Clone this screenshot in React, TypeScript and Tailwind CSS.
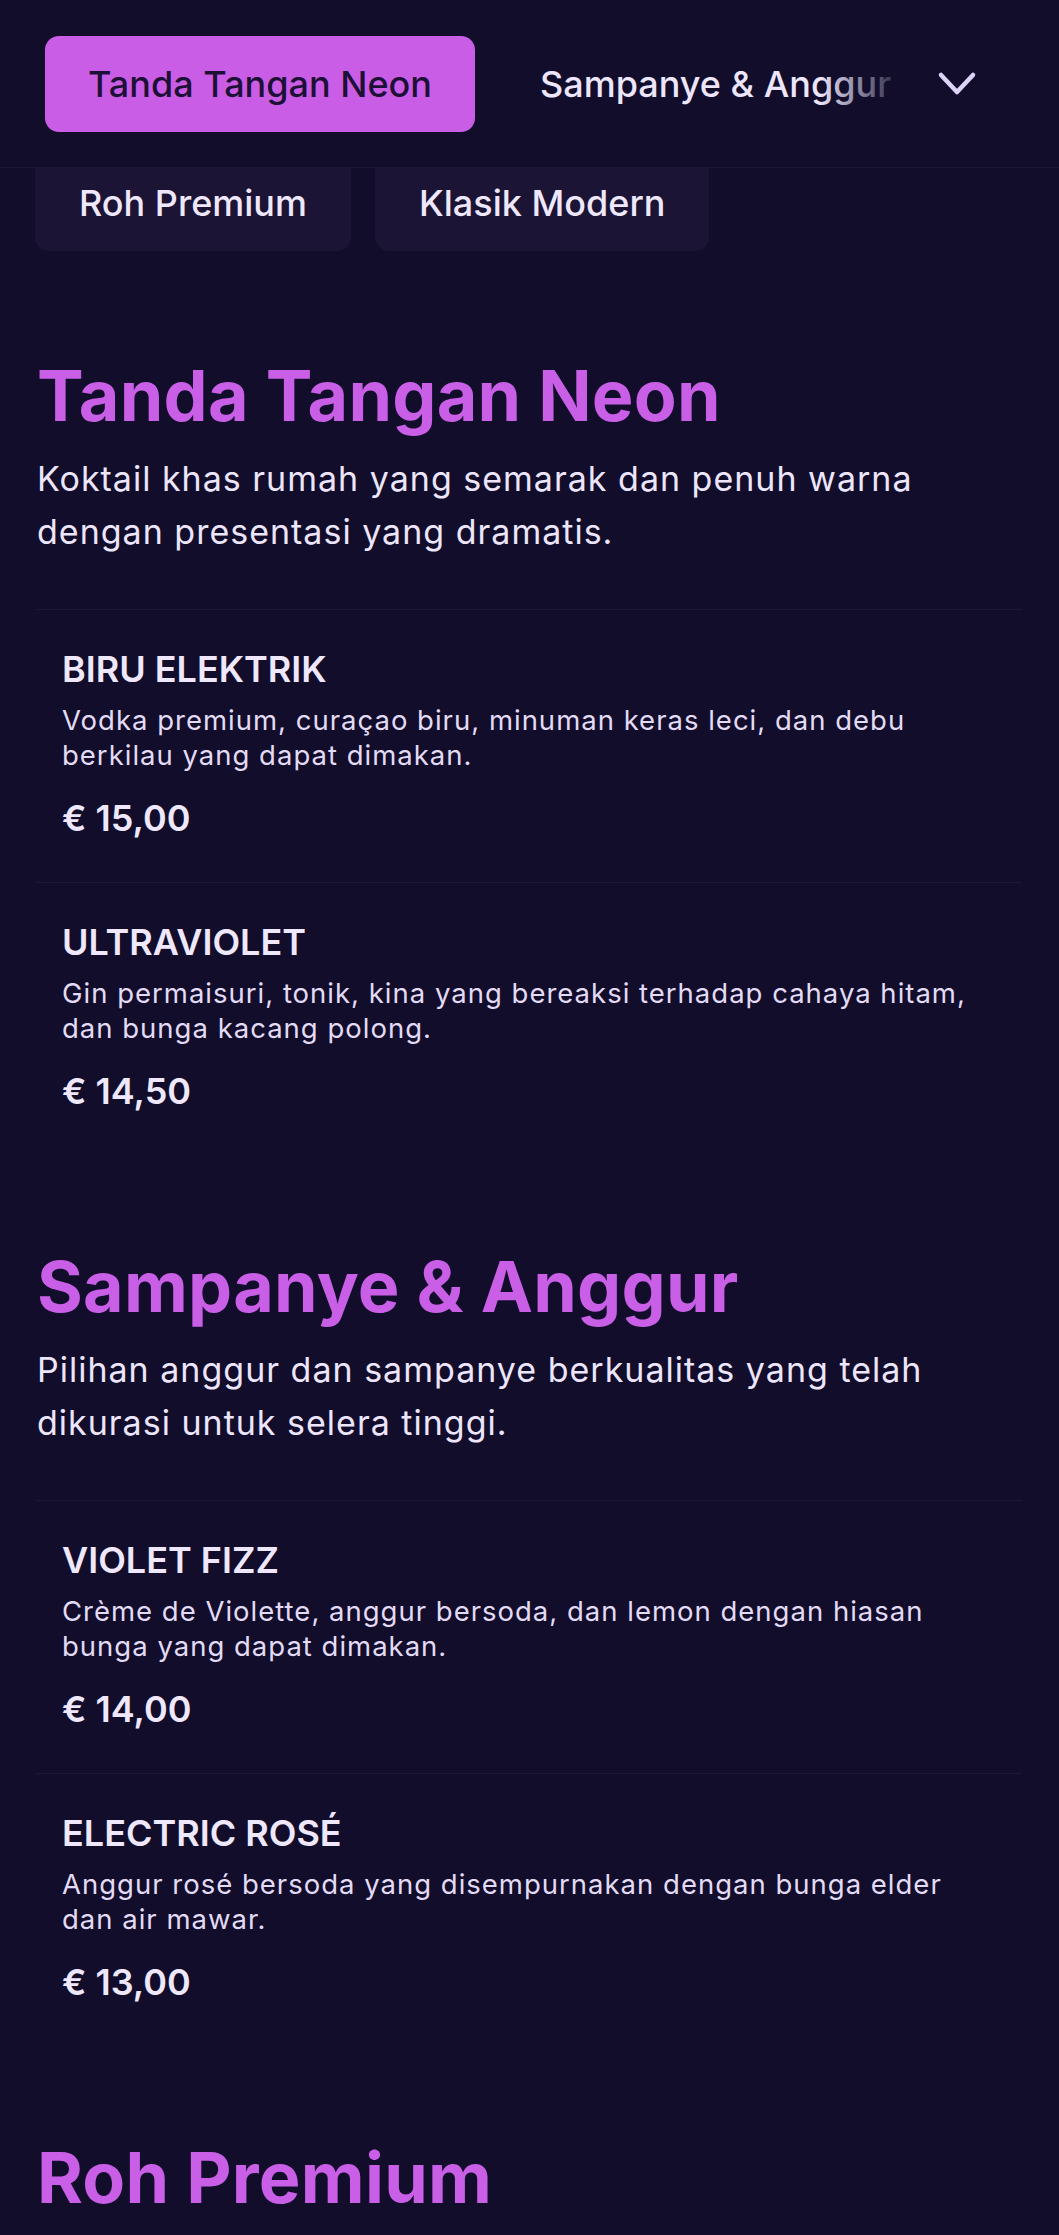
import React from 'react';

type Item = { name: string; description: string; price: string };
type Section = { id: string; title: string; description: string; items: Item[] };

const sections: Section[] = [
  {
    id: 'neon',
    title: 'Tanda Tangan Neon',
    description: 'Koktail khas rumah yang semarak dan penuh warna dengan presentasi yang dramatis.',
    items: [
      {
        name: 'BIRU ELEKTRIK',
        description: 'Vodka premium, curaçao biru, minuman keras leci, dan debu berkilau yang dapat dimakan.',
        price: '€ 15,00',
      },
      {
        name: 'ULTRAVIOLET',
        description: 'Gin permaisuri, tonik, kina yang bereaksi terhadap cahaya hitam, dan bunga kacang polong.',
        price: '€ 14,50',
      },
    ],
  },
  {
    id: 'sampanye',
    title: 'Sampanye & Anggur',
    description: 'Pilihan anggur dan sampanye berkualitas yang telah dikurasi untuk selera tinggi.',
    items: [
      {
        name: 'VIOLET FIZZ',
        description: 'Crème de Violette, anggur bersoda, dan lemon dengan hiasan bunga yang dapat dimakan.',
        price: '€ 14,00',
      },
      {
        name: 'ELECTRIC ROSÉ',
        description: 'Anggur rosé bersoda yang disempurnakan dengan bunga elder dan air mawar.',
        price: '€ 13,00',
      },
    ],
  },
  {
    id: 'roh',
    title: 'Roh Premium',
    description: 'Pilihan minuman keras premium yang disajikan murni atau dengan es.',
    items: [
      {
        name: 'WISKI TUNGGAL',
        description: 'Single malt berumur 12 tahun dengan aroma madu dan kayu ek.',
        price: '€ 16,00',
      },
    ],
  },
];

const tabs = ['Tanda Tangan Neon', 'Sampanye & Anggur', 'Roh Premium', 'Klasik Modern'];

const ChevronDown = () => (
  <svg width="40" height="28" viewBox="0 0 40 28" fill="none" aria-hidden="true">
    <polyline
      points="4,5 20,22 36,5"
      stroke="#ddd3f8"
      strokeWidth="4.5"
      strokeLinecap="round"
      strokeLinejoin="round"
    />
  </svg>
);

const MenuItem = ({ item }: { item: Item }) => (
  <li className="border-t border-[#1e1839] px-[25px] pt-[37px] pb-[41px]">
    <h3 className="text-[36px] leading-[45px] font-semibold text-[#efe8fd]">{item.name}</h3>
    <p className="mt-[11px] text-[27.5px] leading-[35px] tracking-[1px] text-[#e3dbf5]">{item.description}</p>
    <p className="mt-[23px] text-[36px] leading-[45px] font-semibold text-[#efe8fd]">{item.price}</p>
  </li>
);

export default function App() {
  return (
    <div
      className="h-screen overflow-hidden bg-[#110d2a] text-[#efe8fd]"
      style={{ fontFamily: 'Inter, "Noto Sans", sans-serif' }}
    >
      <header className="relative z-10 flex h-[168px] items-center border-b border-[#1c1736] bg-[#110d2a]">
        <div className="relative flex-1 overflow-hidden pl-[45px]">
          <div className="flex gap-[22px] whitespace-nowrap">
            {tabs.map((tab, i) => (
              <button
                key={tab}
                className={
                  i === 0
                    ? 'flex h-[96px] shrink-0 items-center rounded-[14px] bg-[#ca5de6] px-[43px] text-[36px] font-medium text-[#1d1036]'
                    : 'flex h-[96px] shrink-0 items-center rounded-[14px] px-[43px] text-[36px] font-medium text-[#ece5fb]'
                }
              >
                {tab}
              </button>
            ))}
          </div>
          <div className="pointer-events-none absolute inset-y-0 right-0 w-[90px] bg-gradient-to-r from-[#110d2a00] to-[#110d2a]" />
        </div>
        <button className="flex h-[96px] w-[150px] shrink-0 items-center justify-start pl-[28px]" aria-label="Semua kategori">
          <ChevronDown />
        </button>
      </header>

      {/* Expanded category grid, scrolled under the header */}
      <div className="-mt-[13px] flex gap-[24px] pl-[35px]">
        {tabs.slice(2).map((tab) => (
          <button
            key={tab}
            className="flex h-[96px] items-center rounded-[14px] bg-[#1b1434] px-[44px] text-[36px] font-medium text-[#efe8fd]"
          >
            {tab}
          </button>
        ))}
      </div>

      <main className="flex flex-col gap-[94px] px-[37px] pt-[107px]">
        {sections.map((section) => (
          <section key={section.id}>
            <h2 className="text-[70px] leading-[75px] font-bold tracking-[0.25px] text-[#c95fe6]">
              {section.title}
            </h2>
            <p className="mt-[19px] text-[34px] leading-[53px] tracking-[1px] text-[#ece5fb]">{section.description}</p>
            <ul className="mt-[51px]">
              {section.items.map((item) => (
                <MenuItem key={item.name} item={item} />
              ))}
            </ul>
          </section>
        ))}
      </main>
    </div>
  );
}
